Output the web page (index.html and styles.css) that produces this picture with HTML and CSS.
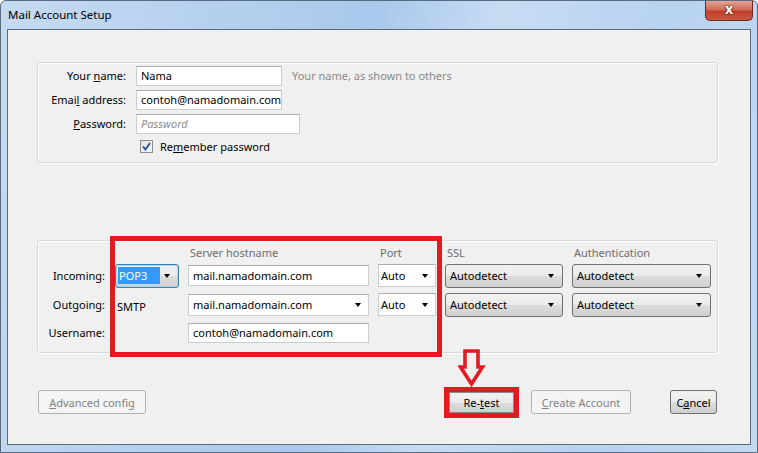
FILE: index.html
```html
<!DOCTYPE html>
<html lang="en">
<head>
    <meta charset="UTF-8">
    <title>Mail Account Setup</title>
    <link rel="stylesheet" href="styles.css">
</head>
<body>
    <div class="window">
        <div class="titlebar">
            <span class="title">Mail Account Setup</span>
            <span class="close">x</span>
        </div>
        <div class="client">
            <div class="groupbox identity">
                <label class="lbl">Your <u>n</u>ame:</label>
                <div class="field">
                    <input type="text" class="text name" value="Nama">
                    <span class="hint">Your name, as shown to others</span>
                </div>
                <label class="lbl">Emai<u>l</u> address:</label>
                <div class="field">
                    <input type="text" class="text name" value="contoh@namadomain.com">
                </div>
                <label class="lbl"><u>P</u>assword:</label>
                <div class="field">
                    <input type="password" class="text pass" placeholder="Password">
                </div>
                <span></span>
                <div class="field">
                    <span class="checkbox">
                        <svg width="9" height="9" viewBox="0 0 9 9"><path d="M1 4.5 L3.5 7.5 L8 1" fill="none" stroke="#1f4f9a" stroke-width="1.8"/></svg>
                    </span>
                    <span class="chklabel">Re<u>m</u>ember password</span>
                </div>
            </div>

            <div class="groupbox servers">
                <span></span>
                <span></span>
                <span class="head">Server hostname</span>
                <span class="head">Port</span>
                <span class="head">SSL</span>
                <span class="head">Authentication</span>

                <label class="lbl">Incoming:</label>
                <div class="btnselect focus"><span class="sel">POP3</span><span class="arrow"></span></div>
                <input type="text" class="text host" value="mail.namadomain.com">
                <div class="whiteselect"><span>Auto</span><span class="arrow"></span></div>
                <div class="btnselect"><span>Autodetect</span><span class="arrow"></span></div>
                <div class="btnselect"><span>Autodetect</span><span class="arrow"></span></div>

                <label class="lbl">Outgoing:</label>
                <span class="smtp">SMTP</span>
                <div class="whiteselect combo"><span>mail.namadomain.com</span><span class="arrow"></span></div>
                <div class="whiteselect"><span>Auto</span><span class="arrow"></span></div>
                <div class="btnselect"><span>Autodetect</span><span class="arrow"></span></div>
                <div class="btnselect"><span>Autodetect</span><span class="arrow"></span></div>

                <label class="lbl">Username:</label>
                <span></span>
                <input type="text" class="text host user" value="contoh@namadomain.com">
            </div>

            <div class="buttons">
                <button class="btn disabled advanced"><u>A</u>dvanced config</button>
                <span class="mark-btn"><button class="btn retest">Re-<u>t</u>est</button></span>
                <button class="btn disabled create"><u>C</u>reate Account</button>
                <button class="btn cancel">C<u>a</u>ncel</button>
            </div>

            <div class="mark-box"></div>
            <svg class="mark-arrow" width="28" height="42" viewBox="0 0 28 42">
                <path d="M7 4 L20 4 L20 20 L24.5 20 L13.5 37 L2.5 20 L7 20 Z" fill="none" stroke="#e21b23" stroke-width="3.6" stroke-linejoin="miter"/>
            </svg>
        </div>
    </div>
</body>
</html>
```

FILE: styles.css
```css
* {box-sizing: border-box;}
body {margin: 0; width: 758px; height: 453px; overflow: hidden; font-family: "Noto Sans", "Open Sans", sans-serif; font-size: 11px; color: #000;}
u {text-decoration: underline; text-underline-offset: 1px;}

.window {width: 758px; height: 453px; background: linear-gradient(100deg, #c4daf1 0%, #b3cfee 30%, #a9c8eb 45%, #c6dcf3 60%, #b8d3ef 80%, #c2d9f1 100%); border: 1px solid #5b6b7e; border-radius: 6px 6px 0 0; display: flex; flex-direction: column;}
.titlebar {height: 28px; display: flex; align-items: flex-start;}
.title {padding: 6px 0 0 7px; font-size: 11.5px; color: #000;}
.close {margin-left: auto; margin-right: 4px; width: 48px; height: 20px; border: 1px solid #6b2a22; border-top: none; border-radius: 0 0 5px 5px; background: linear-gradient(#e6a496, #d06a58 45%, #c13f2a 55%, #c9573f); color: #fff; font-weight: bold; font-size: 14px; text-align: center; line-height: 16px; text-shadow: 0 0 2px #3a0c06, 0 0 1px #3a0c06;}

.client {position: relative; margin: 0 6px 7px 6px; height: 417px; background: #f0f0f0; border: 1px solid #5d6b79;}

.groupbox {border: 1px solid #d5dadf; border-radius: 3px; box-shadow: inset 1px 1px 0 #fff, 1px 1px 0 #fff; width: 681px; margin-left: 29px;}
.lbl {text-align: right; padding-right: 1px; white-space: nowrap;}

.identity {margin-top: 32px; height: 101px; padding-top: 3px; display: grid; grid-template-columns: 89px 1fr; grid-template-rows: 20px 20px 20px 18px; row-gap: 4px; column-gap: 9px; align-items: center;}
.field {display: flex; align-items: center;}
.text {height: 20px; border: 1px solid #c9cdd2; border-top-color: #abadb3; background: #fff; font-family: inherit; font-size: 11px; padding: 0 0 0 4px; color: #000; outline: none;}
.text.name {width: 146px;}
.text.pass {width: 164px;}
.text::placeholder {color: #8d8d8d; font-style: italic;}
.hint {margin-left: 10px; color: #8a8a8a;}
.checkbox {margin-left: 4px; width: 13px; height: 13px; border: 1px solid #8e8f8f; background: linear-gradient(135deg, #dedede, #fbfbfb); display: flex; align-items: center; justify-content: center;}
.chklabel {margin-left: 7px;}

.servers {margin-top: 77px; height: 113px; padding-top: 4px; display: grid; grid-template-columns: 68px 64px 181px 58px 118px 139px; grid-template-rows: 14px 24px 24px 22px; row-gap: 5px; column-gap: 9px; align-items: center;}
.head {color: #6d6d6d; padding-left: 2px; align-self: start; line-height: 16px;}
.smtp {padding-left: 2px; padding-top: 3px;}
.arrow {margin-left: auto; width: 0; height: 0; border-top: 4px solid #000; border-left: 3.5px solid transparent; border-right: 3.5px solid transparent;}
.btnselect {height: 24px; border: 1px solid #707070; border-radius: 3px; background: linear-gradient(#f2f2f2 0%, #ebebeb 50%, #dddddd 51%, #cfcfcf 100%); display: flex; align-items: center; padding: 0 8px 0 4px;}
.btnselect.focus {border-color: #3c7fb1; padding-left: 2px; box-shadow: inset 0 0 0 1px #a8d8f0;}
.sel {background: #3399ff; color: #fff; padding: 1px 13px 1px 1px;}
.whiteselect {height: 23px; border: 1px solid #c9cdd2; border-top-color: #abadb3; background: #fff; display: flex; align-items: center; padding: 0 7px 0 2px;}
.whiteselect.combo {height: 22px; padding-left: 4px;}
.host {height: 21px; width: 181px; padding-left: 4px;}
.host.user {height: 20px;}

.buttons {margin-top: 34px; display: flex; align-items: center; padding-left: 30px;}
.btn {height: 24px; font-family: inherit; font-size: 11px; border: 1px solid #707070; border-radius: 3px; background: linear-gradient(#f2f2f2 0%, #ebebeb 50%, #dddddd 51%, #cfcfcf 100%); color: #000; padding: 0; cursor: default;}
.btn.disabled {border-color: #adb2b5; background: #f4f4f4; color: #838383;}
.advanced {width: 108px;}
.mark-btn {margin-left: auto; border: 5px solid #e21b23; display: flex;}
.retest {width: 65px; height: 21px; border-radius: 0; border-color: #8a8a8a;}
.create {width: 100px; margin-left: 12px;}
.cancel {width: 47px; margin-left: 39px; margin-right: 33px;}

.mark-box {position: absolute; left: 102px; top: 206px; width: 332px; height: 121px; border: 5px solid #e21b23;}
.mark-arrow {position: absolute; left: 450px; top: 317px;}
```
